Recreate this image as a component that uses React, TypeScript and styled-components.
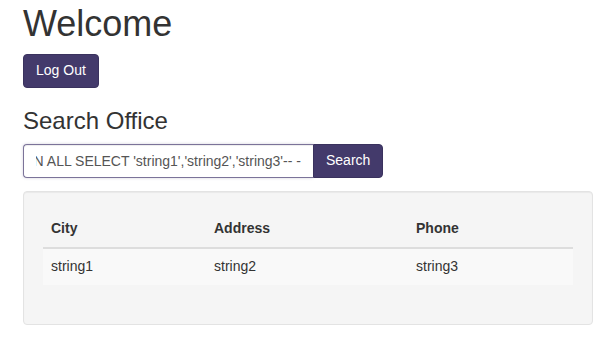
import React, { useEffect, useRef } from 'react';
import styled, { createGlobalStyle } from 'styled-components';

const GlobalStyle = createGlobalStyle`
  html, body {
    margin: 0;
    padding: 0;
    background: #fff;
  }
  body {
    font-family: "Liberation Sans", Arial, Helvetica, sans-serif;
    font-size: 14px;
    line-height: 1.42857;
    color: #333;
  }
  * {
    box-sizing: border-box;
  }
`;

const Page = styled.div`
  padding: 0 12px 0 23px;
`;

const Heading = styled.h1`
  margin: 4px 0 10px;
  font-size: 36px;
  font-weight: 500;
  line-height: 1.1;
`;

const SubHeading = styled.h3`
  margin: 20px 0 10px;
  font-size: 24px;
  font-weight: 500;
  line-height: 1.1;
`;

const Button = styled.button<{ $joined?: boolean }>`
  display: inline-block;
  height: 34px;
  padding: 6px 12px;
  font-family: inherit;
  font-size: 14px;
  line-height: 1.42857;
  color: #fff;
  background: #433a6b;
  border: 1px solid #3a325e;
  border-radius: ${({ $joined }) => ($joined ? '0 4px 4px 0' : '4px')};
  cursor: pointer;
`;

const SearchRow = styled.form`
  display: flex;
  margin: 0 0 13px;
`;

const SearchInput = styled.input`
  width: 290px;
  height: 34px;
  padding: 6px 12px;
  font-family: inherit;
  font-size: 14px;
  color: #555;
  background: #fff;
  border: 1px solid #7b7399;
  border-right: none;
  border-radius: 4px 0 0 4px;
  box-shadow: inset 0 1px 1px rgba(0, 0, 0, 0.075), 0 0 3px rgba(67, 58, 107, 0.25);
  outline: none;
`;

const Well = styled.div`
  width: 570px;
  padding: 19px;
  margin-bottom: 20px;
  background: #f5f5f5;
  border: 1px solid #e3e3e3;
  border-radius: 4px;
  box-shadow: inset 0 1px 1px rgba(0, 0, 0, 0.05);
`;

const Table = styled.table`
  width: 100%;
  margin-bottom: 20px;
  border-collapse: collapse;
  border-spacing: 0;
`;

const HeadCell = styled.th<{ $w: number }>`
  width: ${({ $w }) => $w}px;
  padding: 8px;
  text-align: left;
  font-weight: 700;
  line-height: 1.42857;
  border-bottom: 2px solid #ddd;
`;

const BodyRow = styled.tr`
  background: #f9f9f9;
`;

const Cell = styled.td`
  padding: 8px;
  line-height: 1.42857;
`;

const query = "' UNION ALL SELECT 'string1','string2','string3'-- -";

const columns = [
  { label: 'City', width: 163 },
  { label: 'Address', width: 202 },
  { label: 'Phone', width: 165 },
];

const rows = [['string1', 'string2', 'string3']];

export default function App() {
  const inputRef = useRef<HTMLInputElement>(null);

  useEffect(() => {
    const el = inputRef.current;
    if (el) el.scrollLeft = el.scrollWidth;
  }, []);

  return (
    <>
      <GlobalStyle />
      <Page>
        <Heading>Welcome</Heading>
        <Button type="button">Log Out</Button>
        <SubHeading>Search Office</SubHeading>
        <SearchRow onSubmit={(e) => e.preventDefault()}>
          <SearchInput ref={inputRef} type="text" defaultValue={query} />
          <Button type="submit" $joined>
            Search
          </Button>
        </SearchRow>
        <Well>
          <Table>
            <thead>
              <tr>
                {columns.map((c) => (
                  <HeadCell key={c.label} $w={c.width}>
                    {c.label}
                  </HeadCell>
                ))}
              </tr>
            </thead>
            <tbody>
              {rows.map((r, i) => (
                <BodyRow key={i}>
                  {r.map((v, j) => (
                    <Cell key={j}>{v}</Cell>
                  ))}
                </BodyRow>
              ))}
            </tbody>
          </Table>
        </Well>
      </Page>
    </>
  );
}
